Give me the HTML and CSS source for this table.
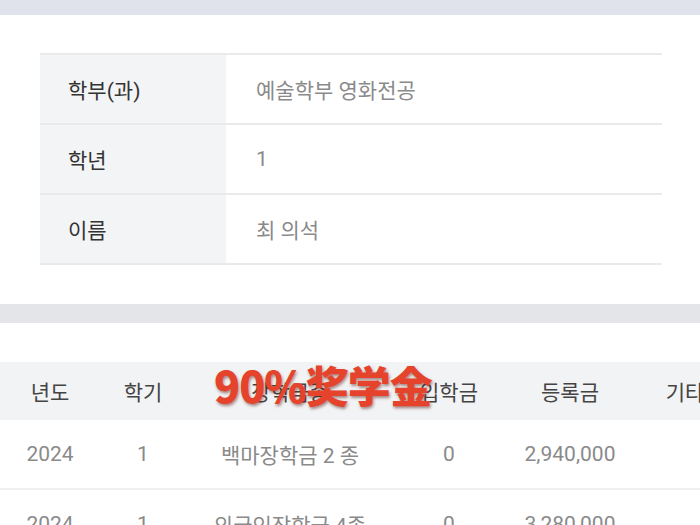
FILE: index.html
```html
<!DOCTYPE html>
<html lang="ko">
<head>
<meta charset="utf-8">
<link rel="stylesheet" href="styles.css">
</head>
<body>
<div class="topbar"></div>
<section class="info">
  <div class="info-table">
    <div class="irow"><div class="label">학부(과)</div><div class="value">예술학부 영화전공</div></div>
    <div class="irow"><div class="label">학년</div><div class="value">1</div></div>
    <div class="irow"><div class="label">이름</div><div class="value">최 의석</div></div>
  </div>
</section>
<div class="band"></div>
<section class="scholar">
  <div class="grid thead">
    <div>년도</div><div>학기</div><div>장학금종</div><div>입학금</div><div>등록금</div><div>기타</div>
  </div>
  <div class="grid trow">
    <div>2024</div><div>1</div><div>백마장학금 2 종</div><div>0</div><div>2,940,000</div><div></div>
  </div>
  <div class="grid trow">
    <div>2024</div><div>1</div><div>외국인장학금 4종</div><div>0</div><div>3,280,000</div><div></div>
  </div>
  <div class="stamp">90%奖学金</div>
</section>
</body>
</html>
```

FILE: styles.css
```css
html, body {
  margin: 0;
  padding: 0;
  background: #ffffff;
  font-family: Roboto, "Noto Sans CJK KR", "Noto Sans", sans-serif;
  overflow: hidden;
}
.topbar {
  height: 15px;
  background: #e1e3ec;
}
.info {
  padding: 38px 38px 39px 40px;
}
.info-table {
  width: 622px;
  border-top: 2px solid #e9eaec;
}
.irow {
  display: flex;
  height: 68px;
  border-bottom: 2px solid #e9eaec;
}
.label {
  width: 186px;
  background: #f3f4f6;
  display: flex;
  align-items: center;
  padding-left: 28px;
  box-sizing: border-box;
  font-size: 21px;
  color: #333;
}
.value {
  flex: 1;
  display: flex;
  align-items: center;
  padding-left: 30px;
  font-size: 21px;
  color: #8a8a8a;
}
.band {
  height: 19px;
  background: #e3e5e9;
}
.scholar {
  position: relative;
  padding-top: 39px;
}
.grid {
  display: grid;
  grid-template-columns: 100px 86px 208px 110px 132px 98px;
  width: 734px;
  align-items: center;
  text-align: center;
  white-space: nowrap;
}
.thead {
  height: 58px;
  background: #f2f3f5;
  font-size: 21px;
  color: #444;
}
.trow {
  height: 68px;
  border-bottom: 2px solid #eeeff1;
  font-size: 21px;
  color: #8a8a8a;
}
.stamp {
  position: absolute;
  left: 214px;
  top: 35px;
  font-family: "Noto Sans CJK SC", sans-serif;
  font-weight: 900;
  font-size: 43px;
  line-height: 52px;
  color: #e5432b;
  letter-spacing: -1px;
  text-shadow: 1px 2px 3px rgba(90, 30, 20, 0.5);
}
```
